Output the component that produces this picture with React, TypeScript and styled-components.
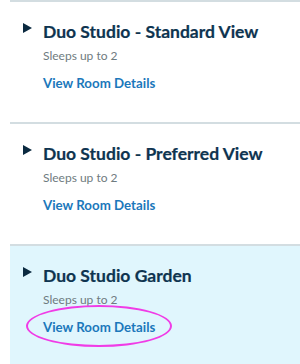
import React from 'react';
import styled, { createGlobalStyle } from 'styled-components';

const GlobalStyle = createGlobalStyle`
  body {
    margin: 0;
    background: #ffffff;
    font-family: Lato, 'Open Sans', sans-serif;
  }
`;

interface Room {
  name: string;
  sleeps: number;
  selected?: boolean;
}

const rooms: Room[] = [
  { name: 'Duo Studio - Standard View', sleeps: 2 },
  { name: 'Duo Studio - Preferred View', sleeps: 2 },
  { name: 'Duo Studio Garden', sleeps: 2, selected: true },
];

const App = () => {
  return (
    <>
      <GlobalStyle />
      <List>
        {rooms.map((room) => (
          <RoomCard key={room.name} $selected={!!room.selected}>
            <Caret />
            <Info>
              <Title>{room.name}</Title>
              <Sleeps>Sleeps up to {room.sleeps}</Sleeps>
              <DetailsLink href="#">
                View Room Details
                {room.selected && <Highlight />}
              </DetailsLink>
            </Info>
          </RoomCard>
        ))}
      </List>
    </>
  );
};

const List = styled.div`
  padding-left: 10px;
  display: flex;
  flex-direction: column;
`;

const RoomCard = styled.div<{ $selected: boolean }>`
  display: flex;
  align-items: flex-start;
  gap: 11px;
  height: 122px;
  box-sizing: border-box;
  padding: 21px 0 0 13px;
  border-top: 2px solid #d3dde1;
  background-color: ${(p) => (p.$selected ? '#e0f6fd' : '#ffffff')};
`;

const Caret = styled.div`
  margin-top: 0;
  width: 0;
  height: 0;
  border-top: 5.5px solid transparent;
  border-bottom: 5.5px solid transparent;
  border-left: 9px solid #0b2a40;
`;

const Info = styled.div`
  display: flex;
  flex-direction: column;
`;

const Title = styled.h4`
  margin: 0;
  font-size: 17.5px;
  font-weight: 700;
  line-height: 18px;
  color: #0e3450;
  -webkit-text-stroke: 0.2px #0e3450;
`;

const Sleeps = styled.div`
  margin-top: 8px;
  font-size: 12px;
  line-height: 14px;
  color: #6f7b80;
`;

const DetailsLink = styled.a`
  position: relative;
  align-self: flex-start;
  margin-top: 12px;
  font-size: 13.3px;
  font-weight: 700;
  line-height: 16px;
  color: #1b78bb;
  text-decoration: none;
`;

const Highlight = styled.span`
  position: absolute;
  left: -17px;
  right: -17px;
  top: -14px;
  bottom: -12px;
  border: 2px solid #f03ce6;
  border-radius: 50%;
`;

export default App;
